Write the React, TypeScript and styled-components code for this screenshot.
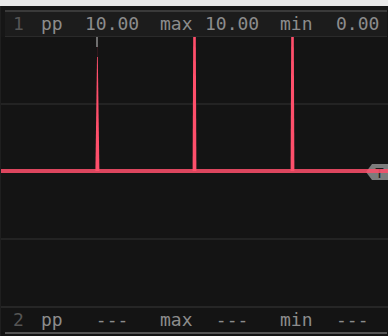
import React from 'react'
import styled, { createGlobalStyle } from 'styled-components'

const GlobalStyle = createGlobalStyle`
  html, body {
    margin: 0;
    padding: 0;
    background: #e9e9e9;
  }
  body {
    font-family: "DejaVu Sans Mono", "Liberation Mono", monospace;
  }
`

const Panel = styled.div`
  margin-top: 6px;
  width: 388px;
  height: 330px;
  background: #141414;
  box-sizing: border-box;
  border-left: 1px solid #1f1f1f;
  display: flex;
  flex-direction: column;
`

const TopBar = styled.div`
  padding: 4px 1px 0 4px;
  background: #161616;
`

const StatRow = styled.div<{ $top?: boolean }>`
  display: grid;
  grid-template-columns: 28px 44px 75px 45px 75px 56px 1fr;
  align-items: center;
  height: 24px;
  padding-left: 8px;
  background: ${({ $top }) => ($top ? '#1c1c1c' : '#141414')};
  border-top: ${({ $top }) => ($top ? '2px solid #3a3a3a' : 'none')};
  border-bottom: ${({ $top }) => ($top ? '1px solid #2a2a2a' : 'none')};
  font-size: 18px;
  line-height: 1;
  color: #8c8c8c;
  white-space: pre;
`

const Index = styled.span`
  color: #555;
`

const Cell = styled.span`
  color: #8c8c8c;
`

const Chart = styled.svg`
  display: block;
  width: 387px;
  height: 269px;
`

const BottomBar = styled.div`
  display: flex;
  flex-direction: column;
  border-top: 2px solid #262626;
`

const BottomRowWrap = styled.div`
  margin-left: 4px;
  margin-right: 1px;
  border-bottom: 2px solid #555;
`

type Stat = { idx: string; pp: string; max: string; min: string }

const rows: Stat[] = [
  { idx: '1', pp: '10.00', max: '10.00', min: '0.00' },
  { idx: '2', pp: ' ---', max: ' ---', min: '---' },
]

const Row = ({ s, top }: { s: Stat; top?: boolean }) => (
  <StatRow $top={top}>
    <Index>{s.idx}</Index>
    <Cell>pp</Cell>
    <Cell>{s.pp}</Cell>
    <Cell>max</Cell>
    <Cell>{s.max}</Cell>
    <Cell>min</Cell>
    <Cell>{s.min}</Cell>
  </StatRow>
)

const RED = '#ff4f6b'

const Plot = () => {
  const base = 134
  return (
    <Chart viewBox="0 0 387 269">
      <rect x="0" y="66" width="387" height="2" fill="#232323" />
      <rect x="0" y="201" width="387" height="2" fill="#232323" />
      {/* first spike: thin tip then tapering body */}
      <rect x="95.5" y="0" width="1" height="10" fill="#c9c9c9" />
      <polygon points={`96,20 96.8,20 98.4,${base} 94.4,${base}`} fill={RED} />
      <polygon points={`96,10 96.8,10 96.8,20 96,20`} fill="#3a1a20" />
      {/* second and third spikes */}
      <polygon points={`192.2,0 194.8,0 195.4,${base} 191.6,${base}`} fill={RED} />
      <polygon points={`290.2,0 292.8,0 293.4,${base} 289.6,${base}`} fill={RED} />
      {/* threshold tag */}
      <polygon points="365,135 371,127 387,127 387,143 371,143" fill="#7c7c7c" />
      <text
        x="378.5"
        y="141"
        textAnchor="middle"
        fontFamily="DejaVu Sans Mono, monospace"
        fontSize="14"
        fill="#1c1c1c"
      >
        T
      </text>
      <rect x="0" y={base - 2} width="387" height="4" fill={RED} opacity="0.85" />
    </Chart>
  )
}

export default function App() {
  return (
    <>
      <GlobalStyle />
      <Panel>
        <TopBar>
          <Row s={rows[0]} top />
        </TopBar>
        <Plot />
        <BottomBar>
          <BottomRowWrap>
            <Row s={rows[1]} />
          </BottomRowWrap>
        </BottomBar>
      </Panel>
    </>
  )
}
